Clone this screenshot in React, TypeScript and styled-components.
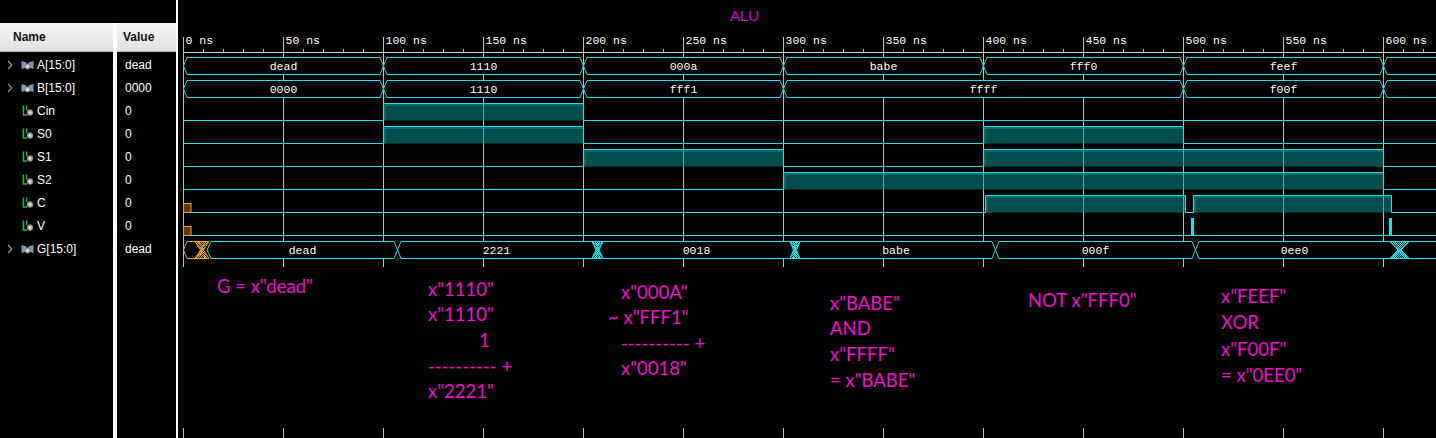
import React from "react";
import styled, { createGlobalStyle } from "styled-components";

const CY = "#17e4ea";
const TEAL = "rgba(0,150,150,0.52)";
const GRID = "#bdbdbd";
const ORANGE = "#f0a020";
const MAGENTA = "#f20dcf";

const Global = createGlobalStyle`
  html, body { margin: 0; padding: 0; background: #000; }
  body {
    width: 1436px; height: 438px; overflow: hidden;
    font-family: "Liberation Sans", Arial, sans-serif;
  }
  #root { width: 1436px; height: 438px; }
`;

const Screen = styled.div`
  display: flex;
  width: 1436px;
  height: 438px;
  background: #000;
  overflow: hidden;
`;

/* ---------- left side: names + values ---------- */
const SidePanel = styled.div`
  display: flex;
  flex-direction: column;
  width: 176px;
  flex: none;
`;
const SideTop = styled.div`
  height: 23px;
  flex: none;
`;
const SideColumns = styled.div`
  display: flex;
  flex: 1;
`;
const Column = styled.div<{ $w: number }>`
  width: ${(p) => p.$w}px;
  display: flex;
  flex-direction: column;
  flex: none;
`;
const ColumnDivider = styled.div`
  width: 4px;
  background: #fff;
  flex: none;
`;
const HeaderCell = styled.div<{ $pad: number }>`
  height: 29px;
  margin-bottom: 1px;
  box-sizing: border-box;
  padding-left: ${(p) => p.$pad}px;
  display: flex;
  align-items: center;
  background: linear-gradient(#f7f7f7, #e1e1e1);
  border-bottom: 1px solid #b5b5b5;
  font-weight: bold;
  font-size: 12px;
  color: #111;
`;
const NameCell = styled.div`
  height: 23px;
  display: flex;
  align-items: center;
  padding-left: 7px;
  color: #fff;
  font-size: 12px;
  white-space: nowrap;
`;
const ChevronSlot = styled.span`
  width: 14px;
  display: flex;
  align-items: center;
  flex: none;
`;
const IconSlot = styled.span<{ $bit?: boolean }>`
  width: 16px;
  padding-left: ${(p) => (p.$bit ? 1 : 0)}px;
  box-sizing: border-box;
  display: flex;
  align-items: center;
  flex: none;
`;
const ValueCell = styled.div`
  height: 23px;
  display: flex;
  align-items: center;
  padding-left: 8px;
  color: #fff;
  font-size: 12px;
`;
const Splitter = styled.div`
  width: 2px;
  background: #fff;
  flex: none;
`;

/* ---------- wave side ---------- */
const WavePanel = styled.div`
  flex: 1;
  display: flex;
  flex-direction: column;
  min-width: 0;
`;
const TitleBar = styled.div`
  height: 30px;
  flex: none;
  box-sizing: border-box;
  padding-left: 552px;
  padding-top: 7px;
  font-size: 15px;
  line-height: 18px;
  color: #d800d8;
`;
const RulerSvg = styled.svg`
  display: block;
  width: 1258px;
  height: 23px;
  flex: none;
`;
const RulerText = styled.text`
  font-family: "Liberation Mono", "Courier New", monospace;
  font-size: 11.5px;
  fill: #fff;
`;
const WaveBody = styled.div`
  flex: 1;
  display: flex;
  flex-direction: column;
  background-image: linear-gradient(to right, ${GRID} 0 1px, transparent 1px 100px);
  background-size: 100px 100%;
  background-position: 5px 0;
  background-repeat: repeat-x;
`;
const Rows = styled.div`
  display: flex;
  flex-direction: column;
  flex: none;
`;
const RowSvg = styled.svg`
  display: block;
  width: 1258px;
  height: 23px;
  overflow: hidden;
`;
const BusText = styled.text`
  font-family: "Liberation Mono", "Courier New", monospace;
  font-size: 11.5px;
  fill: #fff;
`;

/* ---------- annotations ---------- */
const Notes = styled.div`
  margin-top: 7px;
  height: 161px;
  flex: none;
  background: #000;
  display: flex;
  padding-left: 6px;
  font-family: Lato, "Open Sans", sans-serif;
  font-size: 18.5px;
  color: ${MAGENTA};
`;
const NoteCol = styled.div<{ $left: number; $top: number; $lh: number }>`
  width: 200px;
  flex: none;
  box-sizing: border-box;
  padding-left: ${(p) => p.$left}px;
  padding-top: ${(p) => p.$top}px;
  line-height: ${(p) => p.$lh}px;
  white-space: pre;
`;
const NoteLine = styled.div<{ $shift: number }>`
  margin-left: ${(p) => p.$shift}px;
`;

/* ---------- icons ---------- */
const Chevron = () => (
  <svg width="6" height="10" viewBox="0 0 6 10">
    <path d="M1 1 L4.8 5 L1 9" stroke="#a0a0a0" strokeWidth="1.1" fill="none" />
  </svg>
);
const BusIcon = () => (
  <svg width="13" height="10" viewBox="0 0 13 10">
    <path d="M0.5 1 L5.5 2.5 V7.5 L0.5 9 Z" fill="#7d9aba" />
    <path d="M12.5 1 L7.5 2.5 V7.5 L12.5 9 Z" fill="#7d9aba" />
    <circle cx="6.5" cy="6.4" r="2.7" fill="#b9b9b9" stroke="#6c6c6c" strokeWidth="0.6" />
    <circle cx="6.5" cy="6.4" r="1" fill="#fff" />
  </svg>
);
const BitIcon = () => (
  <svg width="12" height="11" viewBox="0 0 12 11">
    <path d="M1.5 0.5 V10 H5" stroke="#2bb545" strokeWidth="1.5" fill="none" />
    <path d="M4.6 0.5 V5.2" stroke="#2bb545" strokeWidth="1.5" fill="none" />
    <circle cx="8" cy="7.6" r="3" fill="#a9a9a9" stroke="#6a6a6a" strokeWidth="0.5" />
    <circle cx="8" cy="7.6" r="1.1" fill="#f2f2f2" />
  </svg>
);

/* ---------- waveform drawing ---------- */
type Seg = { lp: number; lt: number; rt: number; rp: number; label?: string; color?: string };
type Hatch = { a: number; b: number; color: string };

const TOP = 4.5;
const BOT = 21.5;
const MID = 13;

function makeBus(crossings: number[], labels: string[]): Seg[] {
  const s = 3.5;
  const segs: Seg[] = [];
  let lp = 183.5;
  let lt = 187;
  crossings.forEach((c, i) => {
    segs.push({ lp, lt, rt: c - s, rp: c, label: labels[i] });
    lp = c;
    lt = c + s;
  });
  segs.push({ lp, lt, rt: 1500, rp: 1504, label: labels[crossings.length] });
  return segs;
}

const BusWave: React.FC<{ segs: Seg[]; hatches?: Hatch[] }> = ({ segs, hatches = [] }) => (
  <RowSvg viewBox="0 0 1258 23">
    <defs>
      <pattern id="chk-cy" width="2" height="2" patternUnits="userSpaceOnUse">
        <rect width="1" height="1" fill={CY} />
        <rect x="1" y="1" width="1" height="1" fill={CY} />
      </pattern>
      <pattern id="chk-or" width="2" height="2" patternUnits="userSpaceOnUse">
        <rect width="1" height="1" fill={ORANGE} />
        <rect x="1" y="1" width="1" height="1" fill={ORANGE} />
      </pattern>
    </defs>
    <g transform="translate(-178 0)">
      {segs.map((s, i) => (
        <polygon
          key={i}
          points={`${s.lp},${MID} ${s.lt},${TOP} ${s.rt},${TOP} ${s.rp},${MID} ${s.rt},${BOT} ${s.lt},${BOT}`}
          fill="#000"
          stroke={s.color ?? CY}
          strokeWidth={1}
        />
      ))}
      {hatches.map((h, i) => {
        const c = (h.a + h.b) / 2;
        const pat = h.color === ORANGE ? "url(#chk-or)" : "url(#chk-cy)";
        return (
          <g key={`h${i}`}>
            <polygon points={`${h.a},${TOP} ${h.b},${TOP} ${c + 1.5},${MID} ${c - 1.5},${MID}`} fill={pat} />
            <polygon points={`${h.a},${BOT} ${h.b},${BOT} ${c + 1.5},${MID} ${c - 1.5},${MID}`} fill={pat} />
            <path
              d={`M${h.a} ${TOP} L${h.b - 3} ${BOT} M${h.a + 3} ${TOP} L${h.b} ${BOT} M${h.a} ${BOT} L${h.b - 3} ${TOP} M${h.a + 3} ${BOT} L${h.b} ${TOP} M${h.a} ${TOP} H${h.b} M${h.a} ${BOT} H${h.b}`}
              stroke={h.color}
              strokeWidth={1}
              fill="none"
            />
          </g>
        );
      })}
      {segs
        .filter((s) => s.label)
        .map((s, i) => (
          <BusText key={`t${i}`} x={(s.lt + s.rt) / 2} y={17} textAnchor="middle">
            {s.label}
          </BusText>
        ))}
    </g>
  </RowSvg>
);

const BitWave: React.FC<{ highs: [number, number][]; init?: boolean; spikes?: [number, number][] }> = ({
  highs,
  init,
  spikes = [],
}) => {
  let d = `M${init ? 191 : 183.5} ${BOT}`;
  highs.forEach(([a, b]) => {
    d += ` H${a} V${TOP} H${b} V${BOT}`;
  });
  d += " H1440";
  return (
    <RowSvg viewBox="0 0 1258 23">
      <g transform="translate(-178 0)">
        {highs.map(([a, b], i) => (
          <g key={i}>
            <rect x={a} y={TOP} width={b - a} height={BOT - TOP} fill={TEAL} />
            <path
              d={`M${a + 1.5} ${BOT} V${TOP + 1.5} H${b - 0.5}`}
              stroke="rgba(70,200,200,0.45)"
              strokeWidth={1}
              fill="none"
            />
          </g>
        ))}
        <path d={d} stroke={CY} strokeWidth={1} fill="none" />
        {init && <rect x={183.5} y={12.5} width={7.5} height={9} fill="#5c3c10" stroke={ORANGE} strokeWidth={1} />}
        {spikes.map(([a, b], i) => (
          <rect key={`s${i}`} x={a} y={4} width={b - a} height={18} fill={CY} />
        ))}
      </g>
    </RowSvg>
  );
};

/* ---------- data ---------- */
type Signal = { name: string; value: string; bus: boolean };
const signals: Signal[] = [
  { name: "A[15:0]", value: "dead", bus: true },
  { name: "B[15:0]", value: "0000", bus: true },
  { name: "Cin", value: "0", bus: false },
  { name: "S0", value: "0", bus: false },
  { name: "S1", value: "0", bus: false },
  { name: "S2", value: "0", bus: false },
  { name: "C", value: "0", bus: false },
  { name: "V", value: "0", bus: false },
  { name: "G[15:0]", value: "dead", bus: true },
];

const X = [383.5, 583.5, 783.5, 983.5, 1183.5, 1383.5];
const aSegs = makeBus(X, ["dead", "1110", "000a", "babe", "fff0", "feef", ""]);
const bSegs = makeBus([383.5, 583.5, 783.5, 1183.5, 1383.5], ["0000", "1110", "fff1", "ffff", "f00f", ""]);

const gSegs: Seg[] = [
  { lp: 183.5, lt: 187, rt: 195, rp: 202, color: ORANGE },
  { lp: 207, lt: 211, rt: 394, rp: 397.5, label: "dead" },
  { lp: 397.5, lt: 401, rt: 592, rp: 597.5, label: "2221" },
  { lp: 597.5, lt: 603, rt: 790, rp: 795, label: "0018" },
  { lp: 795, lt: 800, rt: 992, rp: 995.5, label: "babe" },
  { lp: 995.5, lt: 999, rt: 1192, rp: 1195.5, label: "000f" },
  { lp: 1195.5, lt: 1199, rt: 1390, rp: 1399.5, label: "0ee0" },
  { lp: 1399.5, lt: 1409, rt: 1500, rp: 1504 },
];
const gHatches: Hatch[] = [
  { a: 195, b: 209, color: ORANGE },
  { a: 592, b: 603, color: CY },
  { a: 790, b: 800, color: CY },
  { a: 1390, b: 1409, color: CY },
];

type Note = { left: number; top: number; lh: number; lines: { t: string; shift?: number }[] };
const notes: Note[] = [
  { left: 33, top: 6.6, lh: 25.7, lines: [{ t: 'G = x"dead"' }] },
  {
    left: 44,
    top: 9.6,
    lh: 25.7,
    lines: [{ t: 'x"1110"' }, { t: 'x"1110"' }, { t: "1", shift: 51 }, { t: "---------- +" }, { t: 'x"2221"' }],
  },
  {
    left: 37,
    top: 12.6,
    lh: 25.6,
    lines: [{ t: 'x"000A"' }, { t: '~ x"FFF1"', shift: -13 }, { t: "---------- +" }, { t: 'x"0018"' }],
  },
  { left: 46, top: 23.6, lh: 25.8, lines: [{ t: 'x"BABE"' }, { t: "AND" }, { t: 'x"FFFF"' }, { t: '= x"BABE"' }] },
  { left: 44, top: 21.3, lh: 25.7, lines: [{ t: 'NOT x"FFF0"' }] },
  { left: 37, top: 16, lh: 26.4, lines: [{ t: 'x"FEEF"' }, { t: "XOR" }, { t: 'x"F00F"' }, { t: '= x"0EE0"' }] },
];

const Ruler = () => {
  const majors = Array.from({ length: 13 }, (_, k) => 183 + 100 * k);
  const minors = Array.from({ length: 64 }, (_, k) => 183 + 20 * k).filter((x, k) => k % 5 !== 0 && x < 1436);
  return (
    <RulerSvg viewBox="0 0 1258 23">
      <g transform="translate(-178 -30)">
        <rect x={183} y={52} width={1260} height={1} fill="#d4d4d4" />
        {majors.map((x) => (
          <rect key={x} x={x} y={37} width={1} height={16} fill={GRID} />
        ))}
        {minors.map((x) => (
          <rect key={`m${x}`} x={x} y={49} width={1} height={3} fill={GRID} />
        ))}
        {majors.map((x, k) => (
          <RulerText key={`l${x}`} x={x + 2.5} y={43.5}>{`${50 * k} ns`}</RulerText>
        ))}
      </g>
    </RulerSvg>
  );
};

export default function App() {
  return (
    <>
      <Global />
      <Screen>
        <SidePanel>
          <SideTop />
          <SideColumns>
            <Column $w={113}>
              <HeaderCell $pad={13}>Name</HeaderCell>
              {signals.map((s) => (
                <NameCell key={s.name}>
                  <ChevronSlot>{s.bus && <Chevron />}</ChevronSlot>
                  <IconSlot $bit={!s.bus}>{s.bus ? <BusIcon /> : <BitIcon />}</IconSlot>
                  {s.name}
                </NameCell>
              ))}
            </Column>
            <ColumnDivider />
            <Column $w={59}>
              <HeaderCell $pad={6}>Value</HeaderCell>
              {signals.map((s) => (
                <ValueCell key={s.name}>{s.value}</ValueCell>
              ))}
            </Column>
          </SideColumns>
        </SidePanel>
        <Splitter />
        <WavePanel>
          <TitleBar>ALU</TitleBar>
          <Ruler />
          <WaveBody>
            <Rows>
              <BusWave segs={aSegs} />
              <BusWave segs={bSegs} />
              <BitWave highs={[[383.5, 583.5]]} />
              <BitWave highs={[[383.5, 583.5], [983.5, 1183.5]]} />
              <BitWave highs={[[583.5, 783.5], [983.5, 1383.5]]} />
              <BitWave highs={[[783.5, 1383.5]]} />
              <BitWave init highs={[[985.5, 1185.5], [1193.5, 1391.5]]} />
              <BitWave init highs={[]} spikes={[[1191, 1194], [1389, 1392]]} />
              <BusWave segs={gSegs} hatches={gHatches} />
            </Rows>
            <Notes>
              {notes.map((n, i) => (
                <NoteCol key={i} $left={n.left} $top={n.top} $lh={n.lh}>
                  {n.lines.map((l, j) => (
                    <NoteLine key={j} $shift={l.shift ?? 0}>
                      {l.t}
                    </NoteLine>
                  ))}
                </NoteCol>
              ))}
            </Notes>
          </WaveBody>
        </WavePanel>
      </Screen>
    </>
  );
}
